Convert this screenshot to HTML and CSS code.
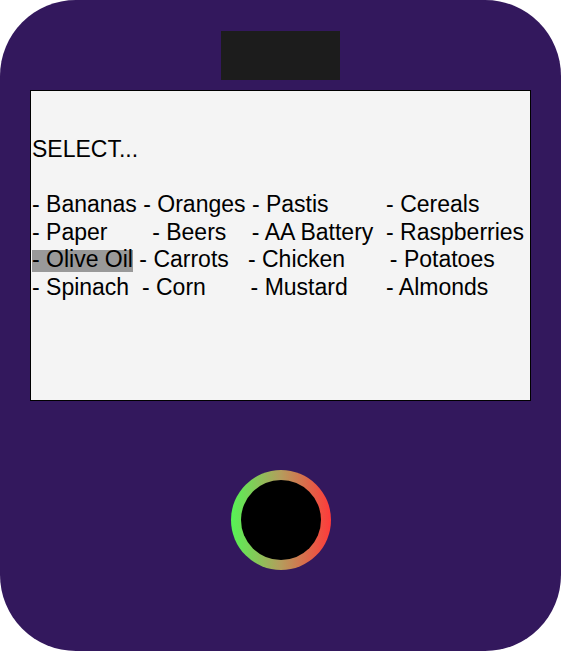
FILE: index.html
```html
<!DOCTYPE html>
<html lang="en">
<head>
<meta charset="utf-8">
<title>Select</title>
<link rel="stylesheet" href="styles.css">
</head>
<body>
<div class="device">
  <div class="camera"></div>
  <div class="screen">
    <div class="line">SELECT...</div>
    <div class="line"> </div>
    <div class="line">- Bananas - Oranges - Pastis         - Cereals</div>
    <div class="line">- Paper       - Beers    - AA Battery  - Raspberries</div>
    <div class="line"><span class="selected">- Olive Oil</span> - Carrots   - Chicken       - Potatoes</div>
    <div class="line">- Spinach  - Corn       - Mustard      - Almonds</div>
  </div>
  <div class="button"><div class="button-core"></div></div>
</div>
</body>
</html>
```
FILE: styles.css
```css
html, body {
  margin: 0;
  padding: 0;
  background: #ffffff;
}

.device {
  width: 561px;
  height: 651px;
  box-sizing: border-box;
  background: #33185d;
  border-radius: 76px;
  display: flex;
  flex-direction: column;
  align-items: center;
  padding-top: 31px;
}

.camera {
  width: 119px;
  height: 49px;
  background: #1c1c1c;
  flex: none;
}

.screen {
  margin-top: 10px;
  width: 501px;
  height: 311px;
  box-sizing: border-box;
  border: 1px solid #000;
  background: #f4f4f4;
  padding-top: 45px;
  padding-left: 1px;
  font-family: "Liberation Sans", Arial, sans-serif;
  font-size: 23px;
  line-height: 27.6px;
  color: #000;
  flex: none;
}

.line {
  white-space: pre;
  height: 27.6px;
}

.selected {
  background: linear-gradient(to bottom, transparent 3.5px, #999999 3.5px);
}

.button {
  margin-top: 69px;
  width: 100px;
  height: 100px;
  border-radius: 50%;
  box-sizing: border-box;
  padding: 10px;
  background: linear-gradient(to right, #55f455, #b59c5c 50%, #ff3a3a);
  flex: none;
}

.button-core {
  width: 80px;
  height: 80px;
  border-radius: 50%;
  background: #000;
}
```
